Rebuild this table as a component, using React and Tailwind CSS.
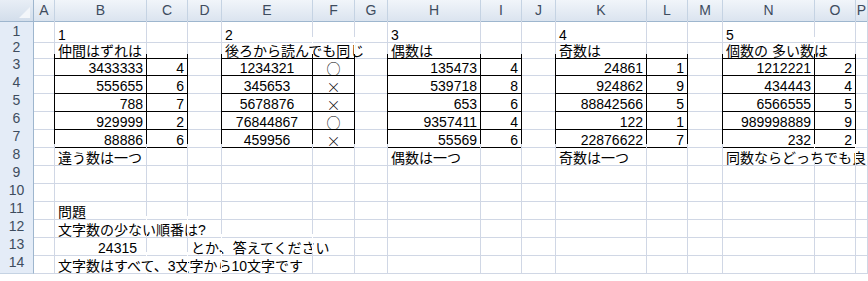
import React from 'react';

// column letters A..P and their pixel widths (P takes the rest)
const LETTERS = ['A', 'B', 'C', 'D', 'E', 'F', 'G', 'H', 'I', 'J', 'K', 'L', 'M', 'N', 'O', 'P'];
const GRID = 'grid grid-cols-[34px_21px_92px_41px_34px_91px_42px_33px_93px_41px_34px_91px_41px_35px_92px_41px_1fr]';
const ROW_H = ['h-[16px]', 'h-[17px]', 'h-[18px]', 'h-[18px]', 'h-[18px]', 'h-[18px]', 'h-[18px]', 'h-[18px]', 'h-[18px]', 'h-[18px]', 'h-[18px]', 'h-[18px]', 'h-[18px]', 'h-[18px]'];

const FONT = "font-['Liberation_Sans','Noto_Sans_CJK_JP',sans-serif]";
const CJK = "font-['Noto_Sans_CJK_JP',sans-serif]";

// bordered blocks: columns (1-based from A) used for rows 3..7
const TABLE_COLS = new Set([2, 3, 5, 6, 8, 9, 11, 12, 14, 15]);
const inTable = (r, c) => r >= 3 && r <= 7 && TABLE_COLS.has(c);

const tables = [
  { col: 2, left: ['3433333', '555655', '788', '929999', '88886'], right: ['4', '6', '7', '2', '6'], leftAlign: 'r' },
  { col: 5, left: ['1234321', '345653', '5678876', '76844867', '459956'], right: ['○', '×', '×', '○', '×'], leftAlign: 'c', rightAlign: 'c', rightCjk: true },
  { col: 8, left: ['135473', '539718', '653', '9357411', '55569'], right: ['4', '8', '6', '4', '6'], leftAlign: 'r' },
  { col: 11, left: ['24861', '924862', '88842566', '122', '22876622'], right: ['1', '9', '5', '1', '7'], leftAlign: 'r' },
  { col: 14, left: ['1212221', '434443', '6566555', '989998889', '232'], right: ['2', '4', '5', '9', '2'], leftAlign: 'r' },
];

const cells = {};
// cells whose right grid line is hidden because text from the left runs across it
const hidden = new Set();
const put = (r, c, text, align = 'l', extra = {}) => {
  cells[`${r}-${c}`] = { text, align, ...extra };
  for (let k = 0; k < (extra.runs || 1) - 1; k++) hidden.add(`${r}-${c + k}`);
};

put(1, 2, '1'); put(1, 5, '2'); put(1, 8, '3'); put(1, 11, '4'); put(1, 14, '5');
put(2, 2, '仲間はずれは');
put(2, 5, '後ろから読んでも同じ', 'l', { runs: 3 });
put(2, 8, '偶数は');
put(2, 11, '奇数は');
put(2, 14, '個数の 多い数は', 'l', { runs: 2 });
tables.forEach((t) => {
  t.left.forEach((v, i) => put(3 + i, t.col, v, t.leftAlign));
  t.right.forEach((v, i) => put(3 + i, t.col + 1, v, t.rightAlign || 'r', { cjk: t.rightCjk }));
});
put(8, 2, '違う数は一つ');
put(8, 8, '偶数は一つ');
put(8, 11, '奇数は一つ');
put(8, 14, '同数ならどっちでも良い', 'l', { runs: 3 });
put(11, 2, '問題');
put(12, 2, '文字数の少ない順番は?', 'l', { runs: 3 });
put(13, 2, '24315', 'r', { pad: true });
put(13, 4, 'とか、答えてください', 'l', { runs: 3 });
put(14, 2, '文字数はすべて、3文字から10文字です', 'l', { runs: 4 });

const justify = { l: 'justify-start pl-[3px]', r: 'justify-end pr-[3px]', c: 'justify-center' };

function Cell({ r, c }) {
  const cell = cells[`${r}-${c}`];
  let right = 'border-r-[#d0d7e5]';
  if (inTable(r, c) || inTable(r, c + 1)) right = 'border-r-black';
  else if (hidden.has(`${r}-${c}`)) right = 'border-r-white';
  const bottom = inTable(r, c) || inTable(r + 1, c) ? 'border-b-black' : 'border-b-[#d0d7e5]';
  return (
    <div className={`flex min-w-0 items-end border-r border-b ${right} ${bottom} ${cell ? justify[cell.align] : ''} ${cell?.pad ? 'pr-[9px]' : ''}`}>
      {cell && (
        <span className={`block whitespace-nowrap text-[14px] leading-[14px] text-black ${cell.cjk ? CJK + ' font-light' : ''}`}>
          {cell.text}
        </span>
      )}
    </div>
  );
}

export default function App() {
  return (
    <div className={`w-[868px] h-[281px] overflow-hidden bg-white ${FONT}`}>
      {/* column headers */}
      <div className={`${GRID} h-[21px] text-[14px] text-[#3e4c5e]`}>
        <div className="relative border-r border-b border-r-[#9eb6ce] border-b-[#9eb6ce] bg-linear-to-b from-[#e8eef6] to-[#d3deeb]">
          <svg className="absolute right-[3px] bottom-[3px]" width="11" height="11" viewBox="0 0 11 11">
            <polygon points="11,0 11,11 0,11" fill="#f3f6fa" />
          </svg>
        </div>
        {LETTERS.map((l) => (
          <div
            key={l}
            className="flex items-center justify-center border-r border-b border-r-[#c5d3e3] border-b-[#9eb6ce] bg-linear-to-b from-[#f1f5fa] to-[#dbe4ef]"
          >
            {l}
          </div>
        ))}
      </div>

      {ROW_H.map((h, i) => {
        const r = i + 1;
        return (
          <div key={r} className={`${GRID} ${h}`}>
            <div className="flex items-center justify-center border-r border-b border-r-[#9eb6ce] border-b-[#c5d3e3] bg-[#e4ecf7] text-[14px] text-[#3e4c5e]">
              {r}
            </div>
            {LETTERS.map((l, j) => (
              <Cell key={l} r={r} c={j + 1} />
            ))}
          </div>
        );
      })}
    </div>
  );
}
